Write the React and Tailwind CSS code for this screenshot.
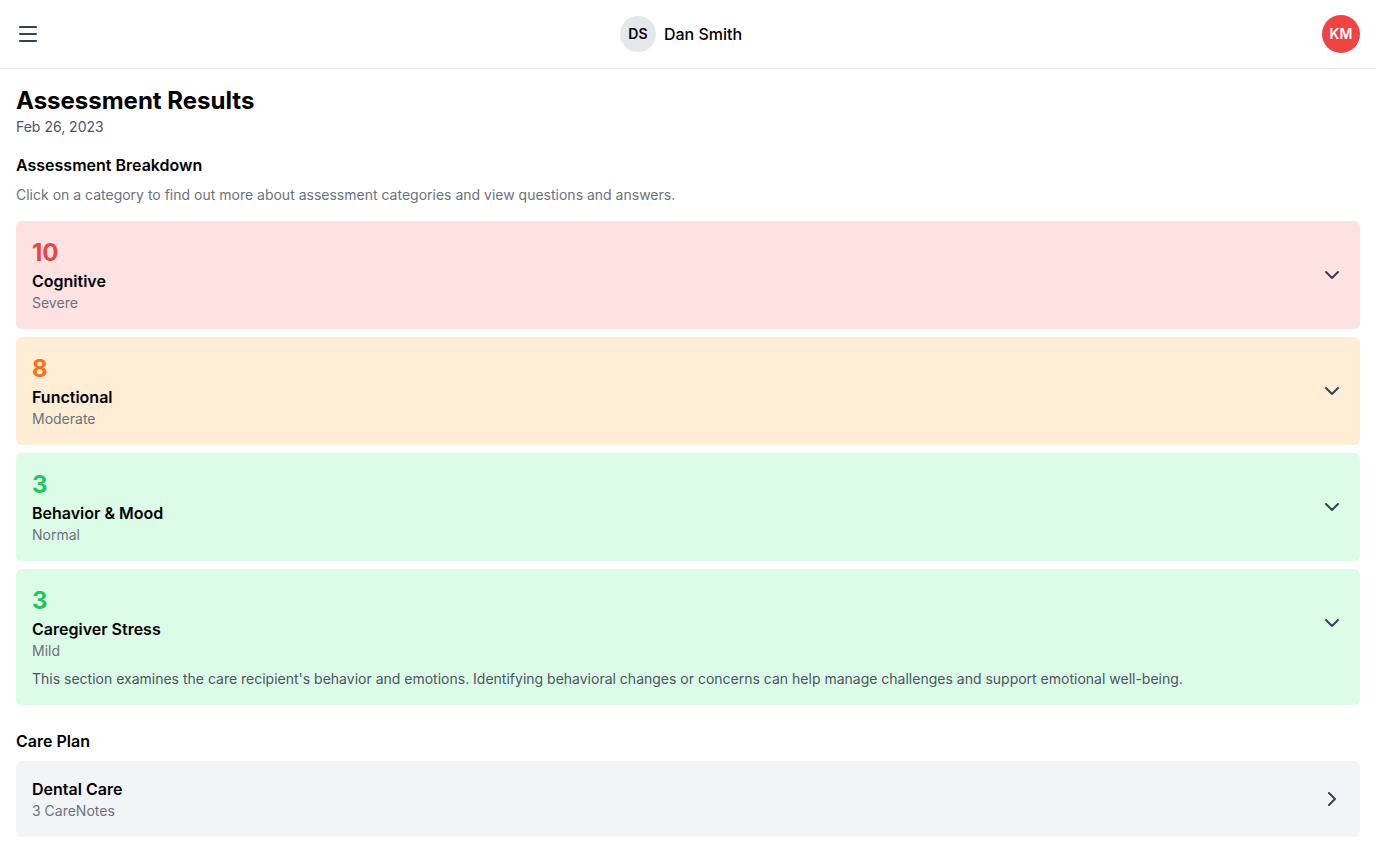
import React from "react";
import { Menu, ChevronDown, ChevronRight } from "lucide-react";

const categories = [
  { score: 10, name: "Cognitive", level: "Severe", bg: "bg-[#fee2e2]", color: "text-[#ef4444]" },
  { score: 8, name: "Functional", level: "Moderate", bg: "bg-[#ffedd5]", color: "text-[#f97316]" },
  { score: 3, name: "Behavior & Mood", level: "Normal", bg: "bg-[#dcfce7]", color: "text-[#22c55e]" },
  {
    score: 3,
    name: "Caregiver Stress",
    level: "Mild",
    bg: "bg-[#dcfce7]",
    color: "text-[#22c55e]",
    note: "This section examines the care recipient's behavior and emotions. Identifying behavioral changes or concerns can help manage challenges and support emotional well-being.",
  },
];

const App = () => {
  return (
    <div className="min-h-screen bg-white text-black font-['Inter',sans-serif]">
      <header className="h-[69px] px-4 flex items-center justify-between border-b border-[#e5e7eb]">
        <button className="text-[#374151]">
          <Menu size={24} strokeWidth={2} />
        </button>
        <div className="flex items-center gap-2">
          <div className="w-9 h-9 rounded-full bg-[#e5e7eb] flex items-center justify-center text-sm font-semibold">
            DS
          </div>
          <span className="text-base font-medium">Dan Smith</span>
        </div>
        <div className="w-[38px] h-[38px] rounded-full bg-[#ef4444] text-white flex items-center justify-center text-sm font-semibold">
          KM
        </div>
      </header>

      <main className="px-4 pt-4 pb-4">
        <h1 className="text-2xl font-bold">Assessment Results</h1>
        <div className="text-sm text-[#4b5563]">Feb 26, 2023</div>

        <h2 className="mt-4 text-base font-semibold">Assessment Breakdown</h2>
        <p className="mt-2 text-sm text-[#6b7280]">
          Click on a category to find out more about assessment categories and view questions and answers.
        </p>

        <div className="mt-4 flex flex-col gap-2">
          {categories.map((c) => (
            <div key={c.name} className={`${c.bg} rounded-md p-4`}>
              <div className="flex items-center justify-between">
                <div>
                  <div className={`text-2xl font-bold ${c.color}`}>{c.score}</div>
                  <div className="text-base font-semibold">{c.name}</div>
                  <div className="text-sm text-[#6b7280]">{c.level}</div>
                </div>
                <ChevronDown size={24} className="text-[#374151] shrink-0" />
              </div>
              {c.note && <p className="mt-2 text-sm text-[#4b5563]">{c.note}</p>}
            </div>
          ))}
        </div>

        <h2 className="mt-6 text-base font-semibold">Care Plan</h2>
        <div className="mt-2 bg-[#f3f4f6] rounded-md p-4 flex items-center justify-between">
          <div>
            <div className="text-base font-semibold">Dental Care</div>
            <div className="text-sm text-[#6b7280]">3 CareNotes</div>
          </div>
          <ChevronRight size={24} className="text-[#374151]" />
        </div>
      </main>
    </div>
  );
};

export default App;
